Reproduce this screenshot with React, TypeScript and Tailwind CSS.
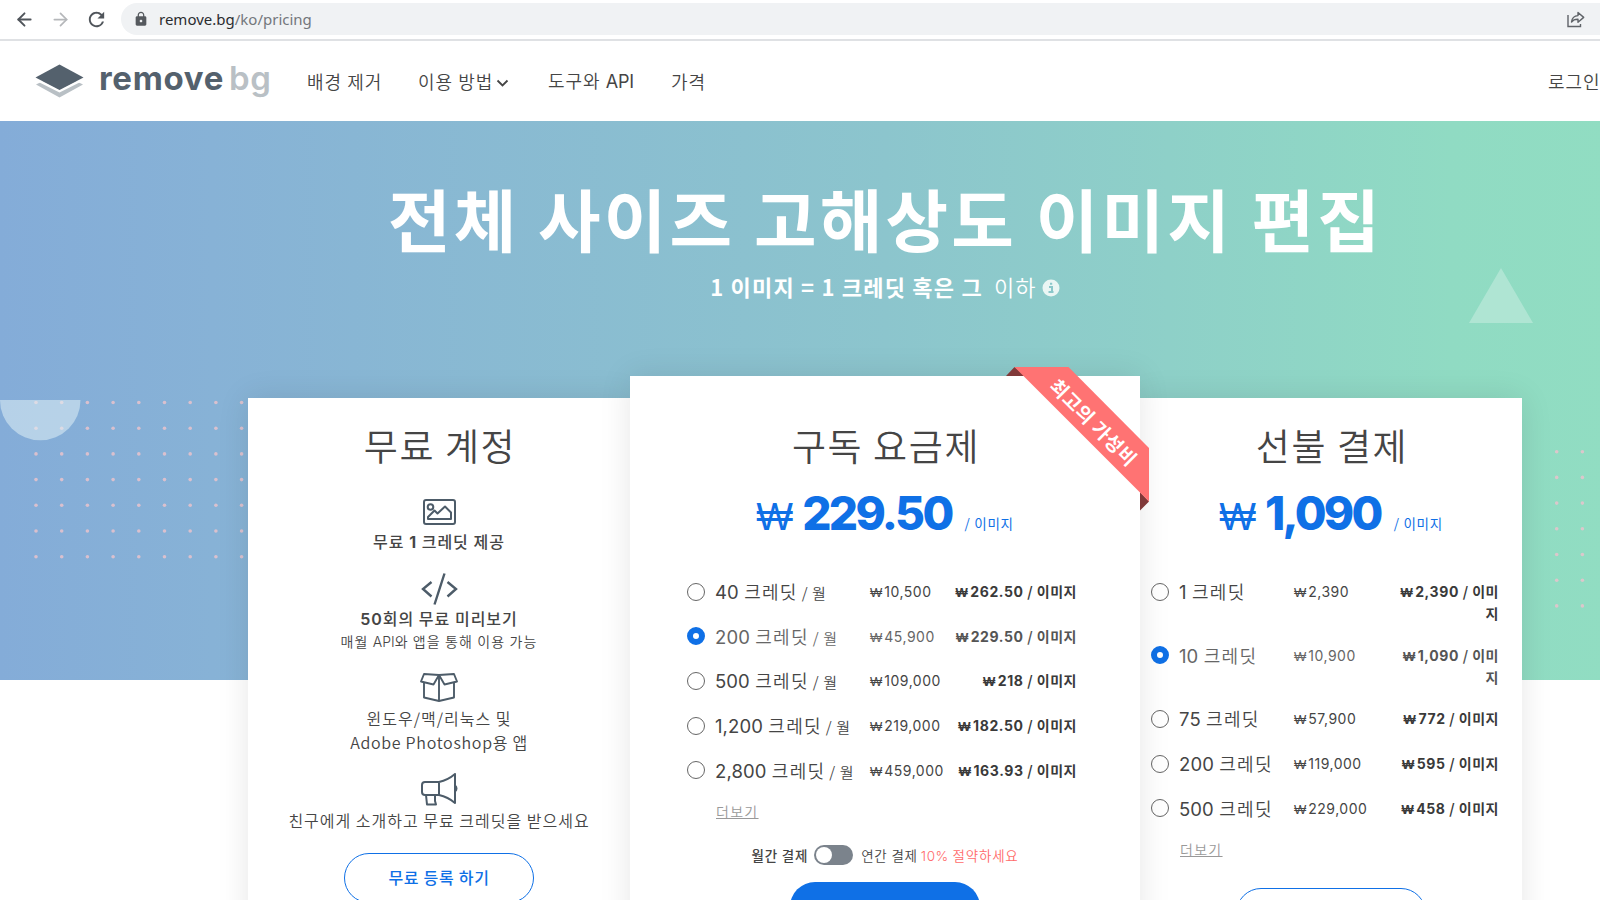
import { ArrowLeft, ArrowRight } from 'lucide-react';
import { MdLock, MdRefresh } from 'react-icons/md';

interface Plan {
  credits: string;
  price: string;
  perImage: string;
  selected?: boolean;
  wraps?: boolean;
}

const subscriptionPlans: Plan[] = [
  { credits: '40', price: '10,500', perImage: '262.50' },
  { credits: '200', price: '45,900', perImage: '229.50', selected: true },
  { credits: '500', price: '109,000', perImage: '218' },
  { credits: '1,200', price: '219,000', perImage: '182.50' },
  { credits: '2,800', price: '459,000', perImage: '163.93' },
];

const prepaidPlans: Plan[] = [
  { credits: '1', price: '2,390', perImage: '2,390', wraps: true },
  { credits: '10', price: '10,900', perImage: '1,090', selected: true, wraps: true },
  { credits: '75', price: '57,900', perImage: '772' },
  { credits: '200', price: '119,000', perImage: '595' },
  { credits: '500', price: '229,000', perImage: '458' },
];

function BrowserBar() {
  return (
    <div className="flex h-[41px] w-[1600px] items-start border-b-2 border-[#dfe1e4] bg-white pt-[3px]">
      <div className="flex h-8 w-[121px] items-center pl-[14px] text-[#50555b]">
        <ArrowLeft size={21} strokeWidth={2.2} />
        <ArrowRight size={21} strokeWidth={2} className="ml-[15px] text-[#b5b7ba]" />
        <MdRefresh size={23} className="ml-[14px]" />
      </div>
      <div className="flex h-8 flex-1 items-center rounded-l-full bg-[#f0f2f4] pl-3">
        <MdLock size={16} className="text-[#55595e]" />
        <span className="ml-[10px] font-['Noto_Sans'] text-[15px] text-[#73777c]">
          <span className="text-[#2a2c2f]">remove.bg</span>/ko/pricing
        </span>
        <svg className="ml-auto mr-[15px]" width="18" height="17" viewBox="0 0 18 17" fill="none" stroke="#5f6368" strokeWidth="1.4">
          <path d="M1 4v11.5h12.5V13" />
          <path d="M4.5 11C5 7 7.500 4.800 11 4.600V1.500L16.700 6.400L11 11.200V8.300C8 8.200 6 9 4.500 11Z" strokeLinejoin="round" />
        </svg>
      </div>
    </div>
  );
}

function Header() {
  return (
    <header className="flex h-20 items-center bg-white pl-[35px] text-[18px] font-[350] tracking-[1px] text-[#454545]">
      <svg className="-mt-px" width="49" height="34" viewBox="0 0 49 34">
        <path d="M1 20.500L24.500 9L48 20.500L24.500 33.500Z" fill="#b9c0c5" />
        <path d="M.5 13.500L24.500 25.500L48.500 13.500V16.500L24.500 28.500L.5 16.500Z" fill="#fff" />
        <path d="M.5 13.500L24.500 .5L48.500 13.500L24.500 26Z" fill="#54616d" />
      </svg>
      <div className="ml-[15px] flex h-12 w-[208px] items-center pb-[6px] font-['Inter'] text-[33px] leading-[48px]">
        <span className="font-bold tracking-[0.7px] text-[#54616d]">remove</span>
        <span className="ml-[5px] font-semibold tracking-[0.6px] text-[#b9c0c5]">bg</span>
      </div>
      <nav className="flex flex-1 items-center whitespace-nowrap">
        <a className="w-[111px]">배경 제거</a>
        <a className="flex w-[130px] items-center">
          이용 방법
          <svg className="ml-[3px] mt-1" width="13" height="9" viewBox="0 0 13 9" fill="none" stroke="#454545" strokeWidth="1.8">
            <path d="M1.500 1.500L6.500 6.500L11.500 1.500" />
          </svg>
        </a>
        <a className="w-[123px]">도구와 <span className="font-['Inter'] font-normal tracking-[-0.2px]">API</span></a>
        <a>가격</a>
      </nav>
      <a className="w-[222px]">로그인</a>
    </header>
  );
}

function DotGrid({ left, top, cols }: { left: number; top: number; cols: number }) {
  const dots = [];
  for (let row = 0; row < 7; row++) {
    for (let col = 0; col < cols; col++) {
      dots.push(<circle key={`${row}-${col}`} cx={left + col * 25.7} cy={top + row * 25.7} r="1.8" />);
    }
  }
  return <g fill="#e9c3cd" fillOpacity="0.85">{dots}</g>;
}

function HeroShapes() {
  return (
    <svg className="absolute left-0 top-0" width="1600" height="558" viewBox="0 0 1600 558">
      <DotGrid left={36} top={281.5} cols={9} />
      <DotGrid left={1556.7} top={330.7} cols={2} />
      <path d="M0 279H80.500A40.250 40.250 0 0 1 0 279Z" fill="#e0f0f6" fillOpacity="0.55" />
      <path d="M1501 147L1533 202H1469Z" fill="#fff" fillOpacity="0.28" />
    </svg>
  );
}

function Radio({ selected }: { selected?: boolean }) {
  return selected ? (
    <span className="size-[18px] rounded-full border-[6px] border-[#0f70e6] bg-white" />
  ) : (
    <span className="size-[18px] rounded-full border-[1.5px] border-[#666] bg-white" />
  );
}

function PlanRow({ plan, monthly }: { plan: Plan; monthly?: boolean }) {
  return (
    <div
      className={`flex font-[350] leading-[21px] ${plan.wraps ? 'h-[63.7px]' : 'h-[44.7px]'} ${
        plan.selected ? 'text-[#666]' : 'text-[#454545]'
      }`}
    >
      <div className="flex h-[21px] w-[28px] items-center">
        <Radio selected={plan.selected} />
      </div>
      <div className={`h-[21px] whitespace-nowrap text-[18px] tracking-[1.3px] ${monthly ? 'w-[155px]' : 'w-[115px]'}`}>
        <span className="font-['Inter'] text-[18.5px] font-normal tracking-[0.1px]">{plan.credits}</span> 크레딧
        {monthly && <span className="text-[15px] tracking-[0.6px]"> / 월</span>}
      </div>
      <div className="h-[21px] w-[80px] whitespace-nowrap text-[13.5px]">
        <span className="font-['Liberation_Sans'] text-[13px]">₩</span>
        <span className="ml-[2px] font-['Inter'] text-[14px] font-normal tracking-[0.5px]">{plan.price}</span>
      </div>
      <div
        className={`ml-auto break-all text-right text-[14px] font-bold tracking-[0.5px] ${
          plan.wraps ? 'w-[106px]' : 'whitespace-nowrap'
        } ${plan.selected ? 'text-[#555]' : 'text-[#3a3a3a]'}`}
      >
        <span className="font-['Liberation_Sans'] text-[13px]">₩</span>
        <span className="ml-[2px] font-['Inter'] text-[14px] tracking-[0.6px]">{plan.perImage}</span> / 이미지
      </div>
    </div>
  );
}

function Price({ value }: { value: string }) {
  return (
    <div className="flex h-14 items-baseline justify-center text-[#0f70e6]">
      <span className="font-['Liberation_Sans'] text-[39px] leading-[56px]">₩</span>
      <span className="ml-[9px] font-['Inter'] text-[46px] font-extrabold leading-[56px] tracking-[-2.7px]">{value}</span>
      <span className="relative -top-px ml-[13px] text-[13.5px] tracking-[0.7px]">/ 이미지</span>
    </div>
  );
}

function FreeCard() {
  return (
    <section className="flex h-[600px] w-[382px] flex-col items-center bg-white text-[16px] font-[350] tracking-[1px] text-[#454545] shadow-[0_0_30px_rgba(0,0,0,0.1)]">
      <h2 className="mt-[19px] h-14 pl-[2px] text-[37px] font-[350] leading-[56px] tracking-[1.6px]">무료 계정</h2>
      <svg className="mt-[26px]" width="33" height="26" viewBox="0 0 33 26" fill="none" stroke="#4d5c69" strokeWidth="2" strokeLinejoin="round">
        <rect x="1" y="1" width="31" height="24" rx="2" />
        <circle cx="7.500" cy="8" r="2.800" />
        <path d="M5 20V18L11.500 11.500L14.500 14.500L22 7.500L28 13.500V20Z" />
      </svg>
      <p className="mt-[4px] h-6 font-medium tracking-[1px]">무료 <span className="font-['Inter'] font-bold">1</span> 크레딧 제공</p>
      <svg className="mt-5" width="37" height="32" viewBox="0 0 37 32" fill="none" stroke="#4d5c69" strokeWidth="2.400">
        <path d="M10.500 9L2 16L10.500 23.500M26.500 9L35 16L26.500 23.500M23.500 .5L13.500 31.500" />
      </svg>
      <p className="mt-px h-6 font-medium"><span className="font-['Inter'] font-semibold">50</span>회의 무료 미리보기</p>
      <p className="mt-px h-5 text-[14px] leading-5 tracking-[1.1px]">매월 <span className="font-['Inter'] tracking-normal">API</span>와 앱을 통해 이용 가능</p>
      <svg className="mt-[22px]" width="38" height="29" viewBox="0 0 38 29" fill="none" stroke="#4d5c69" strokeWidth="1.900" strokeLinejoin="round">
        <path d="M4 10V24.500L19 28L34 24.500V10M19 2V28" />
        <path d="M4 1L19 2L13.500 11.500L1 8.500ZM34 1L19 2L24.500 11.500L37 8.500Z" />
      </svg>
      <p className="mt-[4px] h-12 text-center leading-6">
        윈도우/맥/리눅스 및<br />
        <span className="tracking-[0.7px]">Adobe Photoshop용 앱</span>
      </p>
      <svg className="mt-[19px]" width="37" height="33" viewBox="0 0 37 33" fill="none" stroke="#4d5c69" strokeWidth="2" strokeLinejoin="round">
        <path d="M18 9H4Q1 9 1 12V19Q1 22 4 22H18ZM18 9Q27 7 34 1V30Q27 24 18 22" />
        <path d="M5 22L6 31.500H15L14 28V22" />
        <path d="M34 12.500Q37 15.500 34 18.500Z" fill="#4d5c69" />
      </svg>
      <p className="mt-[2px] h-6">친구에게 소개하고 무료 크레딧을 받으세요</p>
      <button className="mt-[21px] h-[50px] w-[190px] rounded-full border-[1.5px] border-[#0f70e6] pb-[2px] font-medium tracking-[0.7px] text-[#0f70e6]">
        무료 등록 하기
      </button>
    </section>
  );
}

function Ribbon() {
  return (
    <div className="absolute left-[376px] top-[-9px] h-[144px] w-[143px]">
      <svg width="143" height="144" viewBox="0 0 143 144">
        <path d="M0 9L8.500 0L19 9ZM134 143.500L143 134.500L134 125Z" fill="#803939" />
        <path d="M8.500 0H62.500L143 81V134.500Z" fill="#ff7373" />
      </svg>
      <span className="absolute left-[28px] top-[41px] w-[120px] rotate-45 whitespace-nowrap text-center text-[19px] font-bold leading-[28px] tracking-[0.6px] text-white">
        최고의 가성비
      </span>
    </div>
  );
}

function SubscriptionCard() {
  return (
    <section className="relative z-10 h-[622px] w-[510px] bg-white text-[#454545] shadow-[0_0_30px_rgba(0,0,0,0.1)]">
      <Ribbon />
      <h2 className="mt-[41px] h-14 pl-[2px] text-center text-[37px] font-[350] leading-[56px] tracking-[1.6px]">구독 요금제</h2>
      <div className="mt-[12px]">
        <Price value="229.50" />
      </div>
      <div className="mt-[40px] pl-[57px] pr-[63px]">
        {subscriptionPlans.map((plan) => (
          <PlanRow key={plan.credits} plan={plan} monthly />
        ))}
      </div>
      <a className="ml-[86px] mt-[-3px] block h-5 w-fit text-[14px] font-[350] leading-5 tracking-[1.3px] text-[#999] underline">더보기</a>
      <div className="mt-[24px] flex h-5 items-center justify-center whitespace-nowrap text-[13.5px] tracking-[0.8px]">
        <span className="font-medium">월간 결제</span>
        <span className="ml-[6px] flex h-5 w-[39px] items-center rounded-full bg-[#7b838c] pl-[2px]">
          <span className="size-4 rounded-full bg-white" />
        </span>
        <span className="ml-[8px] font-[350]">연간 결제</span>
        <span className="ml-[3px] font-[350] text-[#ff6b6b]"><span className="font-['Inter'] tracking-[0.5px]">10%</span> 절약하세요</span>
      </div>
      <div className="mt-[17px] flex justify-center">
        <button className="h-[50px] w-[190px] rounded-full bg-[#0f70e6] text-[16px] font-medium text-white">지금 구독하기</button>
      </div>
    </section>
  );
}

function PrepaidCard() {
  return (
    <section className="h-[600px] w-[382px] bg-white text-[#454545] shadow-[0_0_30px_rgba(0,0,0,0.1)]">
      <h2 className="mt-[19px] h-14 pl-[2px] text-center text-[37px] font-[350] leading-[56px] tracking-[1.6px]">선불 결제</h2>
      <div className="mt-[12px]">
        <Price value="1,090" />
      </div>
      <div className="mt-[40px] pl-[11px] pr-[23px]">
        {prepaidPlans.map((plan) => (
          <PlanRow key={plan.credits} plan={plan} />
        ))}
      </div>
      <a className="ml-[40px] mt-[-3px] block h-5 w-fit text-[14px] font-[350] leading-5 tracking-[1.3px] text-[#999] underline">더보기</a>
      <div className="mt-[29px] flex justify-center">
        <button className="h-[50px] w-[190px] rounded-full border-[1.5px] border-[#0f70e6]" />
      </div>
    </section>
  );
}

export default function App() {
  return (
    <div className="h-[900px] w-[1600px] overflow-hidden bg-white font-['Noto_Sans_CJK_KR',sans-serif]">
      <BrowserBar />
      <div className="w-[1770px]">
        <Header />
        <main className="relative h-[558.6px] bg-[linear-gradient(to_right,#84acd8_0%,#87b2d6_12%,#8cc5cd_50%,#90dbc3_82%,#92dfc1_100%)]">
          <HeroShapes />
          <div className="relative flex flex-col items-center text-white">
            <h1 className="mt-[45px] h-[104px] whitespace-nowrap pl-px text-[68px] font-bold leading-[104px] tracking-[3.2px]">전체 사이즈 고해상도 이미지 편집</h1>
            <div className="-mt-[2px] flex h-9 items-center text-[22px] leading-9">
              <span className="font-bold tracking-[1.2px]">1 이미지 = 1 크레딧 혹은 그</span>
              <span className="ml-[11px] font-[350] tracking-[1.2px]">이하</span>
              <svg className="ml-[5px] mt-[3px]" width="18" height="18" viewBox="0 0 18 18">
                <circle cx="9" cy="9" r="8.500" fill="#eaf6f4" />
                <path d="M7 8H10V13H11.500M6.500 13H10M8 4.800H10.200" stroke="#8ac7ca" strokeWidth="2" fill="none" />
              </svg>
            </div>
          </div>
          <div className="relative mt-[72px] flex items-end justify-center">
            <FreeCard />
            <SubscriptionCard />
            <PrepaidCard />
          </div>
        </main>
      </div>
    </div>
  );
}
